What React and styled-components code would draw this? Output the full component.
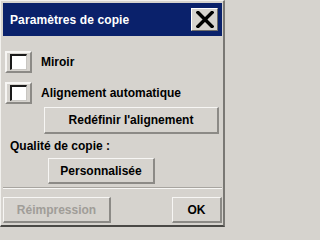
import React from 'react';
import styled, { createGlobalStyle } from 'styled-components';

const Global = createGlobalStyle`
  html, body { margin: 0; padding: 0; background: #d6d3ce; }
  * { box-sizing: border-box; }
`;

const Window = styled.div`
  width: 225px;
  height: 227px;
  background: #d6d3ce;
  border-style: solid;
  border-width: 1px 2px 2px 1px;
  border-color: #f2f1ee #7a7874 #4a4946 #f2f1ee;
  padding: 2px 1px 0 2px;
  display: flex;
  flex-direction: column;
  font-family: "Liberation Sans", Arial, sans-serif;
  font-weight: bold;
  font-size: 12px;
  color: #000;
`;

const TitleBar = styled.div`
  height: 33px;
  background: #0a216b;
  display: flex;
  align-items: center;
  justify-content: space-between;
  padding: 0 4px 0 7px;
`;

const Title = styled.span`
  color: #fff;
  font-size: 12px;
  letter-spacing: 0.1px;
`;

const CloseButton = styled.div`
  width: 27px;
  height: 23px;
  background: #d6d3ce;
  border-style: solid;
  border-width: 1px;
  border-color: #ffffff #6e6c69 #6e6c69 #ffffff;
  display: flex;
  align-items: center;
  justify-content: center;
`;

const CheckRow = styled.div`
  display: flex;
  align-items: center;
  gap: 9px;
  margin: ${p => p.$top}px 0 0 2px;
`;

const CheckFrame = styled.div`
  width: 27px;
  height: 22px;
  border-style: solid;
  border-width: 2px;
  border-color: #f7f6f4 #8c8a86 #8c8a86 #f7f6f4;
  display: flex;
  align-items: center;
  justify-content: center;
`;

const CheckBox = styled.div`
  width: 17px;
  height: 16px;
  background: #fff;
  border-style: solid;
  border-width: 2px 1px 1px 2px;
  border-color: #1a1a1a #c8c6c2 #c8c6c2 #1a1a1a;
`;

const Button = styled.div`
  width: ${p => p.$w}px;
  height: ${p => p.$h}px;
  margin: ${p => p.$m};
  background: #d6d3ce;
  border-style: solid;
  border-width: 1px 2px 2px 1px;
  border-color: #f7f6f4 #8c8a86 #8c8a86 #f7f6f4;
  display: flex;
  align-items: center;
  justify-content: center;
  color: ${p => (p.$disabled ? '#a09d98' : '#000')};
`;

const Label = styled.div`
  margin: 5px 0 0 7px;
  line-height: 14px;
`;

const Separator = styled.div`
  margin-top: 3px;
  height: 2px;
  border-top: 1px solid #a8a5a0;
  border-bottom: 1px solid #f7f6f4;
`;

const Footer = styled.div`
  display: flex;
  justify-content: space-between;
  margin-top: 8px;
`;

export default function App() {
  return (
    <>
      <Global />
      <Window>
        <TitleBar>
          <Title>Paramètres de copie</Title>
          <CloseButton>
            <svg width="18" height="17" viewBox="0 0 18 17">
              <path d="M2 1.5 L16 15.5 M16 1.5 L2 15.5" stroke="#000" strokeWidth="3.4" strokeLinecap="square" />
            </svg>
          </CloseButton>
        </TitleBar>
        <CheckRow $top={15}>
          <CheckFrame><CheckBox /></CheckFrame>
          <span>Miroir</span>
        </CheckRow>
        <CheckRow $top={9}>
          <CheckFrame><CheckBox /></CheckFrame>
          <span>Alignement automatique</span>
        </CheckRow>
        <Button $w={175} $h={27} $m="3px 0 0 41px">Redéfinir l'alignement</Button>
        <Label>Qualité de copie :</Label>
        <Button $w={107} $h={26} $m="5px 0 0 45px">Personnalisée</Button>
        <Separator />
        <Footer>
          <Button $w={108} $h={26} $m="0" $disabled>Réimpression</Button>
          <Button $w={50} $h={26} $m="0">OK</Button>
        </Footer>
      </Window>
    </>
  );
}
